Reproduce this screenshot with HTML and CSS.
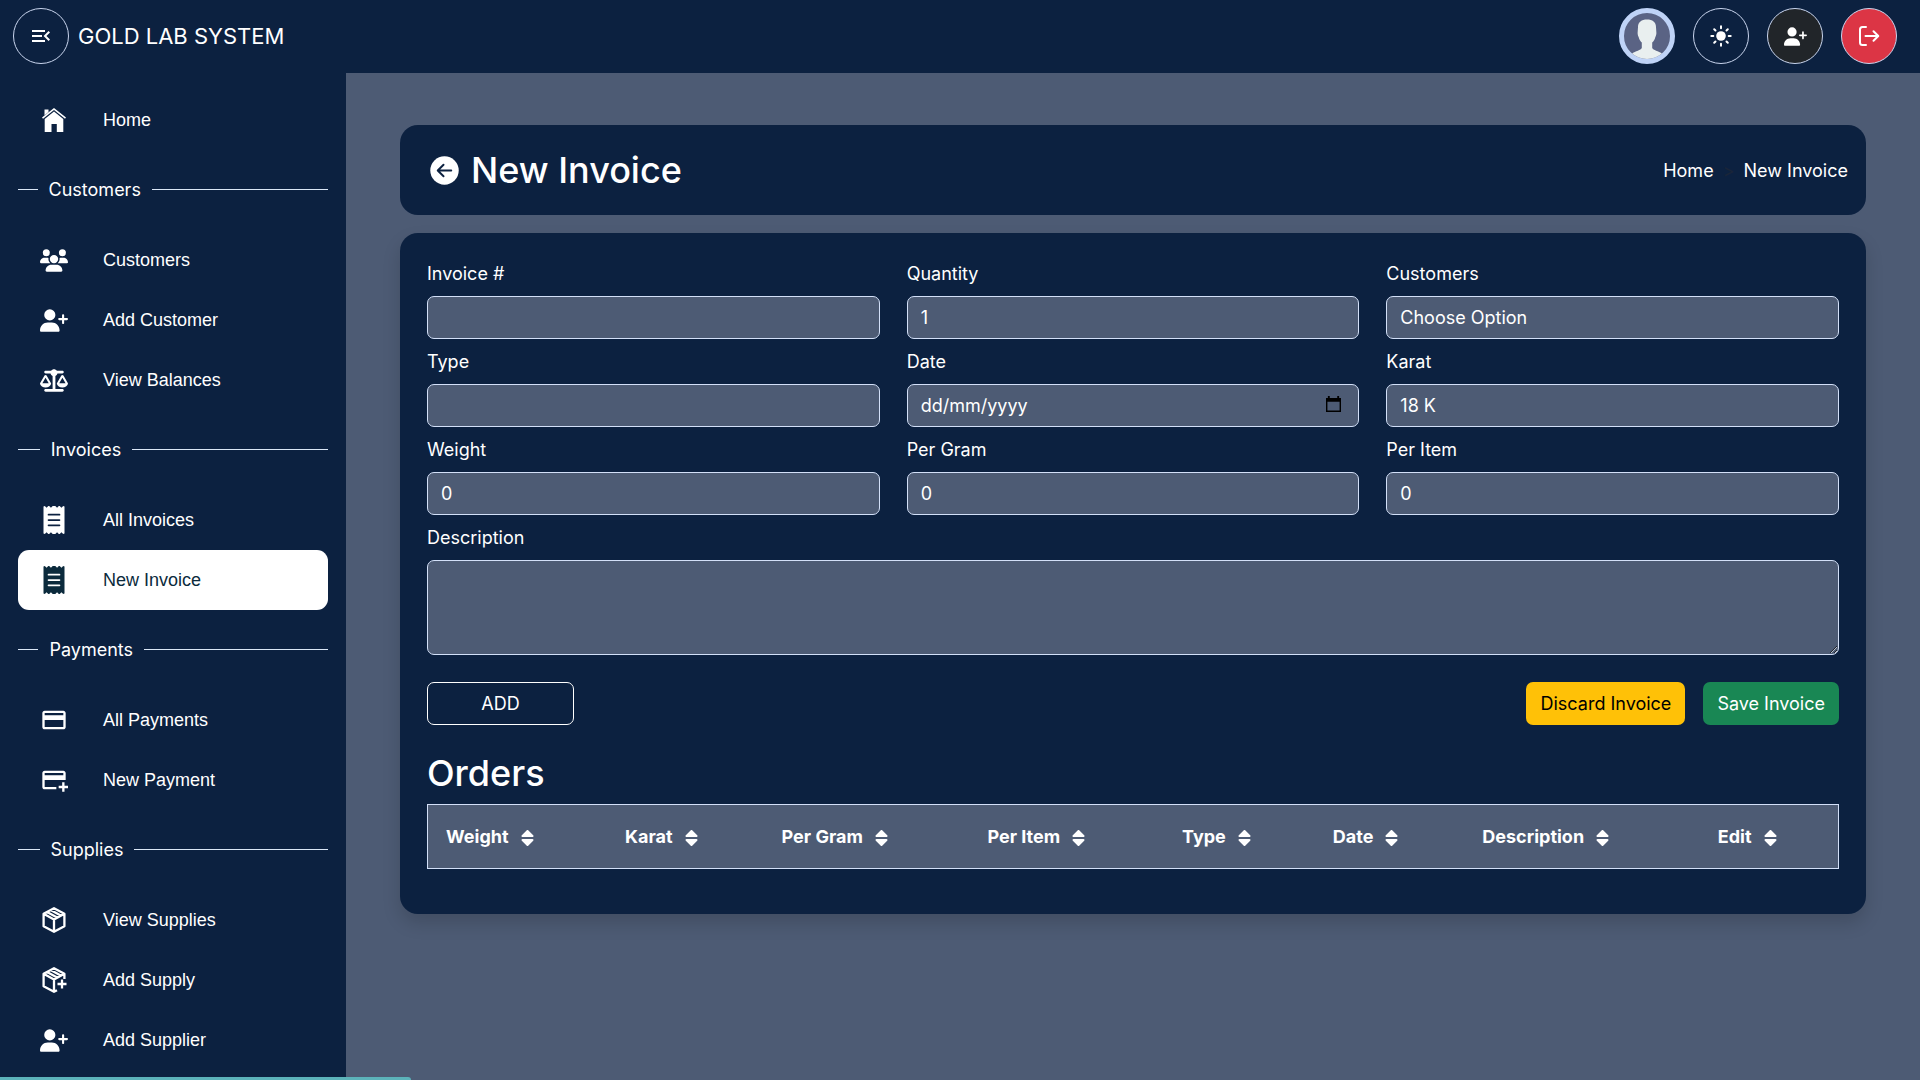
FILE: index.html
```html
<!DOCTYPE html>
<html lang="en">
<head>
<meta charset="utf-8">
<meta name="viewport" content="width=device-width, initial-scale=1">
<title>New Invoice - Gold Lab System</title>
<link rel="stylesheet" href="styles.css">
</head>
<body>
<svg class="sprite" aria-hidden="true">
  <symbol id="user-plus" viewBox="0 0 640 512"><path d="M96 128a128 128 0 1 1 256 0A128 128 0 1 1 96 128zM0 482.300C0 383.800 79.800 304 178.300 304h91.400C368.200 304 448 383.800 448 482.300c0 16.400-13.300 29.700-29.700 29.700H29.700C13.300 512 0 498.700 0 482.300zM504 312V248H440c-13.300 0-24-10.700-24-24s10.700-24 24-24h64V136c0-13.300 10.700-24 24-24s24 10.700 24 24v64h64c13.300 0 24 10.700 24 24s-10.700 24-24 24H552v64c0 13.300-10.700 24-24 24s-24-10.700-24-24z"/></symbol>
  <symbol id="users" viewBox="0 0 640 512"><path d="M144 0a80 80 0 1 1 0 160A80 80 0 1 1 144 0zM512 0a80 80 0 1 1 0 160A80 80 0 1 1 512 0zM0 298.700C0 239.800 47.800 192 106.700 192h42.700c15.900 0 31 3.500 44.600 9.700c-1.300 7.200-1.900 14.700-1.900 22.300c0 38.200 16.800 72.500 43.300 96H21.300C9.600 320 0 310.400 0 298.700zM405.300 320c26.600-23.500 43.300-57.800 43.300-96c0-7.600-.7-15-1.900-22.300c13.600-6.300 28.700-9.700 44.600-9.700h42.700C592.200 192 640 239.800 640 298.700c0 11.800-9.600 21.300-21.300 21.300H405.300zM224 224a96 96 0 1 1 192 0 96 96 0 1 1-192 0zM128 485.300C128 411.700 187.700 352 261.300 352H378.700C452.300 352 512 411.700 512 485.300c0 14.700-11.900 26.700-26.700 26.700H154.700c-14.700 0-26.700-11.900-26.700-26.700z"/></symbol>
  <symbol id="balance" viewBox="0 0 640 512"><path d="M384 32H512c17.700 0 32 14.300 32 32s-14.300 32-32 32H398.400c-5.200 25.800-22.900 47.100-46.400 57.300V448H512c17.700 0 32 14.300 32 32s-14.300 32-32 32H128c-17.700 0-32-14.300-32-32s14.300-32 32-32H288V153.300c-23.500-10.300-41.200-31.600-46.400-57.300H128c-17.700 0-32-14.300-32-32s14.300-32 32-32H256c14.600-19.400 37.800-32 64-32s49.400 12.600 64 32zm55.600 288H584.400L512 195.800 439.600 320zM512 416c-62.900 0-115.200-34-126-78.900c-2.600-11 1-22.300 6.700-32.100l95.200-163.200c5-8.600 14.200-13.800 24.100-13.800s19.100 5.300 24.100 13.800l95.200 163.200c5.700 9.800 9.300 21.100 6.700 32.100C627.200 382 574.900 416 512 416zM126.800 195.800L54.400 320H199.300L126.800 195.800zM.9 337.100c-2.600-11 1-22.300 6.700-32.100l95.200-163.200c5-8.600 14.200-13.800 24.100-13.800s19.100 5.300 24.100 13.800l95.200 163.200c5.700 9.800 9.300 21.100 6.700 32.100C242 382 189.700 416 126.800 416S11.700 382 .9 337.100z"/></symbol>
  <symbol id="home" viewBox="0 0 24 24"><path d="M2.500 1.500h4V4l-4 3.200zM12 0l12 9.400-1 1.300L12 2.100 1 10.700 0 9.400zM12 3.600l9.300 7.300V24h-6.500v-8H9.500v8H2.700V10.900z"/></symbol>
  <symbol id="receipt" viewBox="0 0 384 512"><path fill-rule="evenodd" d="M0 8l24-6 32 32 32-32 16-2 32 34 32-34h48l32 34 32-34 16 2 32 32 32-32 24 6v496l-24 6-32-32-32 32-16 2-32-34-32 34h-48l-32-34-32 34-16-2-32-32-32 32-24-6zM92 142a16 16 0 0 0 0 32H292a16 16 0 0 0 0-32zM92 240a16 16 0 0 0 0 32H292a16 16 0 0 0 0-32zM92 338a16 16 0 0 0 0 32H292a16 16 0 0 0 0-32z"/></symbol>
  <symbol id="card" viewBox="0 0 24 24"><path d="M20 4H4c-1.110 0-1.990.89-1.990 2L2 18c0 1.110.89 2 2 2h16c1.110 0 2-.89 2-2V6c0-1.110-.89-2-2-2zm0 14H4v-6h16v6zm0-10H4V6h16v2z"/></symbol>
  <symbol id="card-plus" viewBox="0 0 24 24"><path d="M20 4H4c-1.110 0-1.990.89-1.990 2L2 18c0 1.110.89 2 2 2h10v-2H4v-6h18V6c0-1.110-.89-2-2-2zm0 4H4V6h16v2zm4 9v2h-3v3h-2v-3h-3v-2h3v-3h2v3h3z"/></symbol>
  <symbol id="box" viewBox="0 0 28 28"><path fill="none" stroke="currentColor" stroke-width="2.300" stroke-linejoin="round" d="M14 2.200l10.400 5.600v12.400L14 25.800 3.600 20.200V7.800zM3.600 7.800L14 13.600l10.400-5.800M14 13.600v12M7 6l10.600 5.800M10.600 4l10.600 5.800"/></symbol>
  <symbol id="box-plus" viewBox="0 0 28 28"><path fill="none" stroke="currentColor" stroke-width="2.300" stroke-linejoin="round" d="M24.400 13V7.800L14 2.200 3.600 7.800v12.400L14 25.800l3-1.600M3.600 7.800L14 13.600l10.400-5.800M14 13.600v12M7 6l10.600 5.800M10.600 4l10.600 5.800M22 13.500v9M17.500 18h9"/></symbol>
  <symbol id="sort" viewBox="0 0 12 16"><path d="M1 7a1 1 0 0 1-.7-1.700L5.300.3a1 1 0 0 1 1.400 0l5 5A1 1 0 0 1 11 7zM1 9h10a1 1 0 0 1 .7 1.700l-5 5a1 1 0 0 1-1.400 0l-5-5A1 1 0 0 1 1 9z"/></symbol>
</svg>

<header class="topbar">
  <button class="round" type="button" aria-label="Collapse menu"><svg class="ico-24" viewBox="0 0 24 24"><path d="M3 18h13v-2H3v2zM3 13h10v-2H3v2zm0-7v2h13V6H3zm18 9.590L17.420 12 21 8.410 19.590 7l-5 5 5 5L21 15.590z"/></svg></button>
  <span class="brand">GOLD LAB SYSTEM</span>
  <div class="actions">
    <button class="round avatar" type="button" aria-label="Profile"><svg viewBox="0 0 46 46"><path fill="#e9efef" d="M14 14c0-5 3.500-7.500 9-7.500s9 2.500 9 7.500l.4 6c0 2-.7 3-1.200 4.500-.5 2-1.500 3.700-3 5V35c1 2.500 6 2.500 10.300 6L36 46H10l-2.500-5c4.300-3.500 9.300-3.500 10.300-6v-5.500c-1.500-1.300-2.500-3-3-5-.5-1.500-1.200-2.500-1.200-4.500z"/></svg></button>
    <button class="round" type="button" aria-label="Light mode"><svg class="ico-24" viewBox="0 0 24 24"><circle cx="12" cy="12" r="4.800"/><path fill="none" stroke="currentColor" stroke-width="2" stroke-linecap="round" d="M12 2.300v2M12 19.700v2M2.300 12h2M19.700 12h2M5.200 5.200l1.300 1.300M17.500 17.500l1.300 1.300M5.200 18.800l1.300-1.300M17.500 6.500l1.300-1.300"/></svg></button>
    <button class="round dark" type="button" aria-label="Add user"><svg class="ico-add"><use href="#user-plus"/></svg></button>
    <button class="round danger" type="button" aria-label="Log out"><svg class="ico-24" viewBox="0 0 24 24"><path fill="none" stroke="currentColor" stroke-width="2" stroke-linecap="round" stroke-linejoin="round" d="M9 3H5.500Q3 3 3 5.500v13Q3 21 5.500 21H9M8.500 12H21M16.500 7.200l4.800 4.800-4.800 4.800"/></svg></button>
  </div>
</header>

<div class="shell">
  <nav class="sidebar" aria-label="Main menu">
    <a class="item" href="#"><span class="ico"><svg class="ico-23"><use href="#home"/></svg></span>Home</a>
    <div class="group">Customers</div>
    <a class="item" href="#"><span class="ico"><svg class="ico-wide"><use href="#users"/></svg></span>Customers</a>
    <a class="item" href="#"><span class="ico"><svg class="ico-wide"><use href="#user-plus"/></svg></span>Add Customer</a>
    <a class="item" href="#"><span class="ico"><svg class="ico-wide"><use href="#balance"/></svg></span>View Balances</a>
    <div class="group">Invoices</div>
    <a class="item" href="#"><span class="ico"><svg class="ico-28"><use href="#receipt"/></svg></span>All Invoices</a>
    <a class="item active" href="#" aria-current="page"><span class="ico"><svg class="ico-28"><use href="#receipt"/></svg></span>New Invoice</a>
    <div class="group">Payments</div>
    <a class="item" href="#"><span class="ico"><svg class="ico-28"><use href="#card"/></svg></span>All Payments</a>
    <a class="item" href="#"><span class="ico"><svg class="ico-28"><use href="#card-plus"/></svg></span>New Payment</a>
    <div class="group">Supplies</div>
    <a class="item" href="#"><span class="ico"><svg class="ico-28"><use href="#box"/></svg></span>View Supplies</a>
    <a class="item" href="#"><span class="ico"><svg class="ico-28"><use href="#box-plus"/></svg></span>Add Supply</a>
    <a class="item" href="#"><span class="ico"><svg class="ico-wide"><use href="#user-plus"/></svg></span>Add Supplier</a>
  </nav>

  <main class="content">
    <section class="card heading">
      <a class="back" href="#" aria-label="Back"><svg viewBox="0 0 30 30"><circle cx="15" cy="15" r="14.700"/><path fill="none" stroke="#0c2140" stroke-width="2" stroke-linecap="round" stroke-linejoin="round" d="M22 15H8.500M14 9l-6 6 6 6"/></svg></a>
      <h1>New Invoice</h1>
      <ol class="crumbs">
        <li><a href="#">Home</a></li>
        <li><a href="#">New Invoice</a></li>
      </ol>
    </section>

    <section class="card panel">
      <form class="form">
        <div class="field"><label for="number">Invoice #</label><input id="number" type="text"></div>
        <div class="field"><label for="quantity">Quantity</label><input id="quantity" type="text" value="1"></div>
        <div class="field"><label for="customer">Customers</label><select id="customer"><option>Choose Option</option></select></div>
        <div class="field"><label for="type">Type</label><input id="type" type="text"></div>
        <div class="field"><label for="date">Date</label>
          <div class="date"><input id="date" type="text" placeholder="dd/mm/yyyy"><button class="picker" type="button" aria-label="Open calendar"><svg viewBox="0 0 16 17"><path fill-rule="evenodd" d="M0 2h2V0h2v2h8V0h2v2h2v15H0zM1.500 6v9.500h13V6z"/></svg></button></div>
        </div>
        <div class="field"><label for="karat">Karat</label><select id="karat"><option>18 K</option></select></div>
        <div class="field"><label for="weight">Weight</label><input id="weight" type="text" value="0"></div>
        <div class="field"><label for="gram">Per Gram</label><input id="gram" type="text" value="0"></div>
        <div class="field"><label for="each">Per Item</label><input id="each" type="text" value="0"></div>
        <div class="field full"><label for="description">Description</label><textarea id="description"></textarea></div>
      </form>
      <div class="buttons">
        <button class="btn add" type="button">ADD</button>
        <button class="btn discard" type="button">Discard Invoice</button>
        <button class="btn save" type="button">Save Invoice</button>
      </div>
      <h2>Orders</h2>
      <table class="orders">
        <colgroup><col class="c-weight"><col class="c-karat"><col class="c-gram"><col class="c-each"><col class="c-type"><col class="c-date"><col class="c-desc"><col></colgroup>
        <thead><tr>
          <th scope="col">Weight<svg><use href="#sort"/></svg></th>
          <th scope="col">Karat<svg><use href="#sort"/></svg></th>
          <th scope="col">Per Gram<svg><use href="#sort"/></svg></th>
          <th scope="col">Per Item<svg><use href="#sort"/></svg></th>
          <th scope="col">Type<svg><use href="#sort"/></svg></th>
          <th scope="col">Date<svg><use href="#sort"/></svg></th>
          <th scope="col">Description<svg><use href="#sort"/></svg></th>
          <th scope="col">Edit<svg><use href="#sort"/></svg></th>
        </tr></thead>
      </table>
    </section>
  </main>
</div>
<div class="progress"></div>
</body>
</html>
```
FILE: styles.css
```css
:root {
  --navy: #0c2140;
  --slate: #4d5b74;
  --line: #d3e0f8;
}

* { box-sizing: border-box; }

body {
  margin: 0;
  min-height: 100vh;
  display: flex;
  flex-direction: column;
  background: var(--slate);
  color: #fff;
  font: 18px/27px Inter, "Liberation Sans", sans-serif;
}

a { color: inherit; text-decoration: none; }
svg { display: block; fill: currentColor; }
button, input, select, textarea { font: inherit; color: inherit; }
button { cursor: pointer; }
.sprite { position: absolute; width: 0; height: 0; }

.ico-23 { width: 24px; height: 24px; }
.ico-24 { width: 24px; height: 24px; }
.ico-28 { width: 28px; height: 28px; }
.ico-wide { width: 28px; height: 23px; }
.ico-add { width: 23px; height: 19px; }

/* Top bar */
.topbar {
  display: flex;
  align-items: center;
  gap: 9px;
  padding: 8px 23px 9px 13px;
  background: var(--navy);
}
.brand { font-size: 22px; }
.actions { display: flex; gap: 18px; margin-left: auto; }
.round {
  display: grid;
  place-items: center;
  width: 56px;
  height: 56px;
  padding: 0;
  border: 1px solid #c9d5ee;
  border-radius: 50%;
  background: transparent;
}
.avatar { border: 5px solid #bfd3f7; background: #5a6384; overflow: hidden; }
.avatar svg { width: 46px; height: 46px; }
.dark { background: #212529; }
.danger { background: #dc3545; }

/* Side menu */
.shell { flex: 1; display: flex; }
.sidebar {
  flex: none;
  width: 346px;
  padding: 17px 18px 10px;
  background: var(--navy);
}
.item {
  display: flex;
  align-items: center;
  height: 60px;
  border-radius: 11px;
  font-family: "Liberation Sans", Arial, sans-serif;
}
.item.active { background: #fff; color: #0b2a3c; }
.ico { display: grid; place-items: center; width: 72px; margin-right: 13px; }
.group { display: flex; align-items: center; height: 80px; padding-bottom: 2px; white-space: nowrap; }
.group::before, .group::after { content: ""; border-top: 1px solid #dbe7f6; }
.group::before { width: 10%; margin-right: 11px; }
.group::after { width: 90%; margin-left: 11px; }

/* Page */
.content { flex: 1; min-width: 0; padding: 52px 54px; }
.card { border-radius: 18px; background: var(--navy); }
.heading { display: flex; align-items: center; padding: 0 18px 0 30px; height: 90px; margin-bottom: 18px; }
.back svg { width: 29px; height: 29px; }
h1, h2 { margin: 0; font-size: 36px; line-height: 43px; font-weight: 500; }
h1 { margin-left: 12px; }
.crumbs { display: flex; margin: 0 0 0 auto; padding: 0; list-style: none; }
.crumbs li + li::before { content: ">"; margin: 0 9px; color: #1a2539; }

.panel { padding: 27px 27px 45px; box-shadow: 0 9px 18px rgba(0, 0, 0, .15); }
.form { display: grid; grid-template-columns: repeat(3, 1fr); gap: 9px 27px; }
.field { display: flex; flex-direction: column; gap: 9px; }
.full { grid-column: 1 / -1; }
input, select, textarea {
  width: 100%;
  height: 43px;
  padding: 0 13px;
  border: 1px solid var(--line);
  border-radius: 7px;
  background: var(--slate);
  appearance: none;
}
textarea { display: block; height: 95px; resize: vertical; }
::placeholder { color: #fff; opacity: 1; }
.date { position: relative; }
.picker {
  position: absolute;
  top: 12px;
  right: 18px;
  padding: 0;
  border: 0;
  background: none;
  color: #000;
}
.picker svg { width: 15px; height: 16px; }

.buttons { display: flex; gap: 18px; margin: 27px 0; }
.btn { height: 43px; padding: 0 13px; border: 1px solid transparent; border-radius: 7px; }
.add { width: 147px; margin-right: auto; border-color: #fff; background: transparent; }
.discard { background: #ffc107; color: #000; }
.save { background: #198754; }

.orders {
  width: 100%;
  margin-top: 9px;
  border: 1px solid var(--line);
  border-spacing: 0;
  table-layout: fixed;
  background: var(--slate);
}
.orders th { height: 63px; padding: 0 18px; text-align: left; font-weight: 700; white-space: nowrap; }
.orders svg { display: inline-block; width: 13px; height: 16px; margin-left: 12px; vertical-align: -3px; }
.c-weight { width: 12.7%; }
.c-karat { width: 11.1%; }
.c-gram { width: 14.6%; }
.c-each { width: 13.8%; }
.c-type { width: 10.7%; }
.c-date { width: 10.6%; }
.c-desc { width: 16.7%; }

.progress {
  position: fixed;
  left: 0;
  bottom: 0;
  width: 411px;
  height: 3px;
  border-top-right-radius: 3px;
  background: #5cb3ba;
}
```
